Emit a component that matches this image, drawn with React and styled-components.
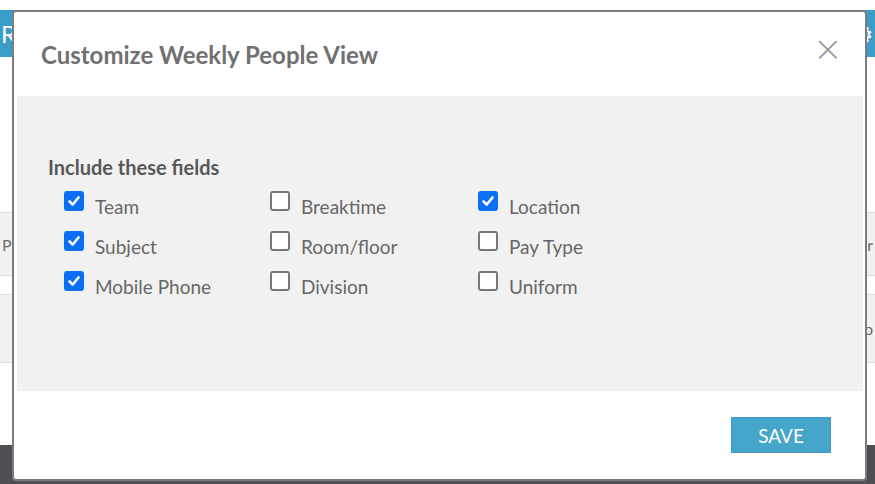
import styled, { createGlobalStyle } from 'styled-components';

const GlobalStyle = createGlobalStyle`
    html, body {
        margin: 0;
        padding: 0;
        background: #ffffff;
    }
    body {
        font-family: Lato, "Noto Sans", sans-serif;
    }
`;

const fields = [
    { label: 'Team', checked: true },
    { label: 'Breaktime', checked: false },
    { label: 'Location', checked: true },
    { label: 'Subject', checked: true },
    { label: 'Room/floor', checked: false },
    { label: 'Pay Type', checked: false },
    { label: 'Mobile Phone', checked: true },
    { label: 'Division', checked: false },
    { label: 'Uniform', checked: false },
];

const Page = styled.div`
    position: relative;
    width: 875px;
    height: 484px;
    overflow: hidden;
    padding-top: 10px;
    box-sizing: border-box;
`;

const TopBar = styled.div`
    display: flex;
    justify-content: space-between;
    align-items: center;
    height: 47px;
    background: #3a9cc9;
    color: #ffffff;
    font-size: 24px;
    padding: 0 1px;
`;

const PageRow = styled.div`
    height: ${p => p.h}px;
    background: ${p => p.bg};
    border-bottom: 1px solid #dcdcdc;
    display: flex;
    justify-content: space-between;
    align-items: center;
    padding: 0 2px;
    color: #6a6a6a;
    font-size: 16px;
`;

const BottomBar = styled.div`
    height: 40px;
    margin-top: 82px;
    background: #4d4f53;
`;

const Modal = styled.div`
    position: absolute;
    left: 12px;
    top: 10px;
    width: 855px;
    height: 471px;
    box-sizing: border-box;
    background: #ffffff;
    border: 2px solid #7d7d7d;
    border-radius: 4px;
    display: flex;
    flex-direction: column;
`;

const Header = styled.div`
    height: 84px;
    display: flex;
    align-items: center;
    justify-content: space-between;
    padding: 0 22px 0 27px;
`;

const Title = styled.h2`
    margin: 0;
    font-size: 24px;
    font-weight: 700;
    color: #707070;
`;

const Close = styled.span`
    font-size: 36px;
    line-height: 1;
    color: #9a9a9a;
    font-family: "DejaVu Sans", sans-serif;
    font-weight: 300;
    margin-top: -10px;
`;

const Body = styled.div`
    height: 295px;
    margin: 0 2px 0 3px;
    background: #f1f1f1;
    padding: 59px 0 0 31px;
    box-sizing: border-box;
`;

const SectionLabel = styled.div`
    font-size: 20px;
    line-height: 24px;
    font-weight: 700;
    color: #585858;
    margin-bottom: 12px;
`;

const Grid = styled.div`
    display: grid;
    grid-template-columns: 206px 208px 206px;
    grid-auto-rows: 40px;
    padding-left: 16px;
`;

const Field = styled.label`
    display: flex;
    align-items: flex-start;
    gap: 11px;
    font-size: 19px;
    color: #676767;
`;

const Box = styled.span`
    width: 20px;
    height: 20px;
    box-sizing: border-box;
    border-radius: 3px;
    border: ${p => (p.checked ? 'none' : '2px solid #777777')};
    background: ${p => (p.checked ? '#0b6ff2' : '#ffffff')};
    display: flex;
    align-items: center;
    justify-content: center;
`;

const FieldText = styled.span`
    margin-top: 6px;
    line-height: 20px;
`;

const Footer = styled.div`
    flex: 1;
    display: flex;
    justify-content: flex-end;
    align-items: flex-start;
    padding: 26px 34px 0 0;
`;

const SaveButton = styled.button`
    width: 100px;
    height: 36px;
    border: 1px solid #3f9bc2;
    background: #45a5cb;
    color: #ffffff;
    font-family: Lato, sans-serif;
    font-size: 19px;
    cursor: pointer;
`;

const Check = () => (
    <svg width="14" height="14" viewBox="0 0 14 14">
        <path d="M2.5 7.5 L5.8 10.5 L11.5 3.5" fill="none" stroke="#ffffff" strokeWidth="2.6" strokeLinecap="round" strokeLinejoin="round" />
    </svg>
);

const App = () => {
    return (
        <>
            <GlobalStyle />
            <Page>
                <TopBar><span>R</span><span>⚙</span></TopBar>
                <PageRow h={155} bg="#ffffff" />
                <PageRow h={62} bg="#f1f1f1"><span>P</span><span>r</span></PageRow>
                <PageRow h={18} bg="#ffffff" />
                <PageRow h={67} bg="#f1f1f1"><span></span><span>o</span></PageRow>
                <BottomBar />
                <Modal>
                    <Header>
                        <Title>Customize Weekly People View</Title>
                        <Close>×</Close>
                    </Header>
                    <Body>
                        <SectionLabel>Include these fields</SectionLabel>
                        <Grid>
                            {fields.map(f => (
                                <Field key={f.label}>
                                    <Box checked={f.checked}>{f.checked ? <Check /> : null}</Box>
                                    <FieldText>{f.label}</FieldText>
                                </Field>
                            ))}
                        </Grid>
                    </Body>
                    <Footer>
                        <SaveButton>SAVE</SaveButton>
                    </Footer>
                </Modal>
            </Page>
        </>
    );
}

export default App;
